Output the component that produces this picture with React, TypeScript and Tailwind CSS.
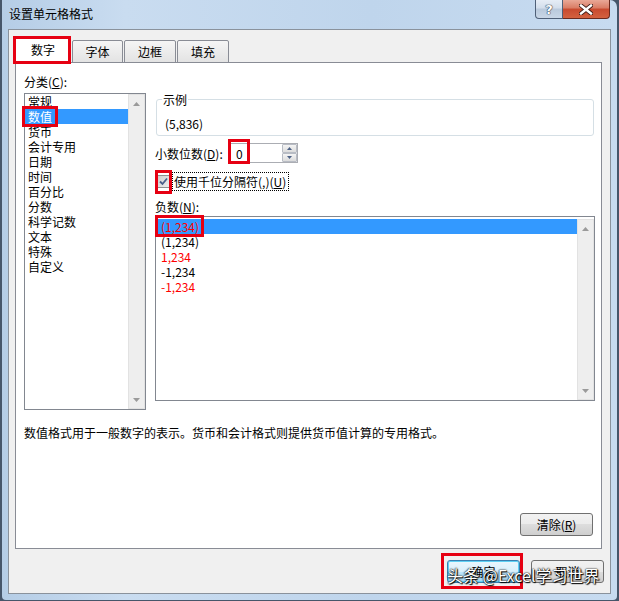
import React from "react";

const CATS = ["常规", "数值", "货币", "会计专用", "日期", "时间", "百分比", "分数", "科学记数", "文本", "特殊", "自定义"];

function Arrow({ down }: { down?: boolean }) {
  return (
    <svg width="7" height="4" viewBox="0 0 7 4">
      {down ? <path d="M0 0 L7 0 L3.5 4 Z" fill="#9a9a9a" /> : <path d="M0 4 L7 4 L3.5 0 Z" fill="#9a9a9a" />}
    </svg>
  );
}

function VScroll() {
  return (
    <div className="w-[17px] h-full flex flex-col justify-between bg-[#eeeeee] border border-[#e2e2e2]">
      <div className="h-[17px] flex items-center justify-center">
        <Arrow />
      </div>
      <div className="h-[17px] flex items-center justify-center">
        <Arrow down />
      </div>
    </div>
  );
}

function Btn({ children, def }: { children: React.ReactNode; def?: boolean }) {
  return (
    <div
      className={
        def
          ? "w-[73px] h-[23px] rounded-[3px] border border-[#3c7fb1] shadow-[inset_0_0_0_1px_#5fd0f4] bg-[linear-gradient(#eaf6fd,#d9f0fc_50%,#bee6fd_50%,#a7d9f5)] flex items-center justify-center leading-[15px]"
          : "w-[73px] h-[23px] rounded-[3px] border border-[#707070] bg-[linear-gradient(#f2f2f2,#ebebeb_50%,#dddddd_50%,#cfcfcf)] flex items-center justify-center leading-[15px]"
      }
    >
      {children}
    </div>
  );
}

export default function App() {
  return (
    <div className="relative w-[619px] h-[601px] bg-[#46566a] pl-[2px] overflow-hidden font-['Noto_Sans_CJK_SC',sans-serif] text-[12px] text-black">
      <div className="w-[615px] h-[600px] rounded-tr-[7px] rounded-b-[4px] bg-[linear-gradient(90deg,#b5cde6,#c9dcf0_20%,#bfd5ec_60%,#c7dbf0)] flex flex-col">
        {/* title bar */}
        <div className="h-[29px] flex items-start justify-between pl-[7px] pr-[7px]">
          <div className="mt-[6px] leading-[16px] text-[12px] text-black">设置单元格格式</div>
          <div className="flex">
            <div className="w-[28px] h-[19px] rounded-bl-[4px] border border-t-0 border-[#4f6078] bg-[linear-gradient(#e6edf6,#d3deeb_45%,#b9c9dc_50%,#c9d7e7)] flex items-center justify-center">
              <span className="font-['DejaVu_Sans',sans-serif] font-bold text-[13px] leading-[15px] text-white [text-shadow:0_0_1px_#2a3a50,0_0_1px_#2a3a50,0_0_1px_#2a3a50]">?</span>
            </div>
            <div className="w-[47px] h-[19px] rounded-br-[4px] border border-t-0 border-l-0 border-[#6b2a1e] bg-[linear-gradient(#e9a897,#d97c64_45%,#c84a2f_50%,#d3613f)] flex items-center justify-center">
              <svg width="14" height="11" viewBox="0 0 14 11">
                <path d="M2 1.5 L12 9.5 M12 1.5 L2 9.5" stroke="#3b1a14" strokeWidth="4.2" strokeLinecap="square" />
                <path d="M2 1.5 L12 9.5 M12 1.5 L2 9.5" stroke="#ffffff" strokeWidth="2.4" strokeLinecap="square" />
              </svg>
            </div>
          </div>
        </div>

        {/* client area */}
        <div className="ml-[6px] w-[603px] h-[565px] border border-[#8a929c] bg-[#f0f0f0] flex flex-col">
          {/* tabs */}
          <div className="ml-[6px] mt-[6px] h-[27px] flex items-end">
            <div className="relative z-10 w-[56px] h-[27px] border border-b-0 border-[#898c95] bg-white flex items-center justify-center pb-[1px] leading-[15px]">
              数字
            </div>
            <div className="ml-[1px] w-[51px] h-[23px] border border-[#898c95] rounded-t-[2px] bg-[linear-gradient(#f5f5f5,#e3e3e3)] flex items-center justify-center pb-[1px] leading-[15px]">
              字体
            </div>
            <div className="ml-[1px] w-[52px] h-[23px] border border-[#898c95] rounded-t-[2px] bg-[linear-gradient(#f5f5f5,#e3e3e3)] flex items-center justify-center pb-[1px] leading-[15px]">
              边框
            </div>
            <div className="ml-[1px] w-[52px] h-[23px] border border-[#898c95] rounded-t-[2px] bg-[linear-gradient(#f5f5f5,#e3e3e3)] flex items-center justify-center pb-[1px] leading-[15px]">
              填充
            </div>
          </div>

          {/* panel */}
          <div className="ml-[6px] -mt-[1px] w-[587px] h-[487px] border border-[#898c95] bg-white flex flex-col pl-[8px] pt-[11px] leading-[15px]">
            <div className="flex">
              {/* left column */}
              <div className="w-[122px] flex flex-col">
                <div className="h-[15px]">
                  分类(<span className="underline">C</span>):
                </div>
                <div className="mt-[4px] w-[122px] h-[317px] border border-[#828790] bg-white flex">
                  <div className="w-[103px] flex flex-col">
                    {CATS.map((c, i) => (
                      <div
                        key={c}
                        className={
                          i === 1
                            ? "h-[15px] pl-[3px] bg-[#3399ff] text-white"
                            : "h-[15px] pl-[3px]"
                        }
                      >
                        {c}
                      </div>
                    ))}
                  </div>
                  <VScroll />
                </div>
              </div>

              {/* right column */}
              <div className="ml-[9px] w-[440px] flex flex-col">
                <div className="relative mt-[25px] ml-[1px] w-[438px] h-[37px] border border-[#d5dfe5] rounded-[3px] pl-[8px] pt-[16px]">
                  <div className="absolute left-[5px] -top-[8px] px-[1px] bg-white text-[#000]">示例</div>
                  (5,836)
                </div>

                <div className="mt-[7px] h-[20px] flex items-center">
                  <div className="w-[75px]">
                    小数位数(<span className="underline">D</span>):
                  </div>
                  <div className="w-[68px] h-[20px] border border-[#abadb3] bg-white flex">
                    <div className="flex-1 pl-[5px] flex items-center">0</div>
                    <div className="w-[15px] flex flex-col">
                      <div className="h-[9px] border border-[#b8bcc4] rounded-[1px] bg-[linear-gradient(#f4f4f4,#dcdcdc)] flex items-center justify-center">
                        <svg width="5" height="3" viewBox="0 0 5 3"><path d="M0 3 L5 3 L2.5 0 Z" fill="#4d6185" /></svg>
                      </div>
                      <div className="h-[9px] border border-[#b8bcc4] rounded-[1px] bg-[linear-gradient(#f4f4f4,#dcdcdc)] flex items-center justify-center">
                        <svg width="5" height="3" viewBox="0 0 5 3"><path d="M0 0 L5 0 L2.5 3 Z" fill="#4d6185" /></svg>
                      </div>
                    </div>
                  </div>
                </div>

                <div className="mt-[9px] h-[19px] flex items-center">
                  <div className="ml-[2px] w-[13px] h-[13px] border border-[#8e8f8f] bg-[linear-gradient(135deg,#d0d0d0,#ececec)] flex items-center justify-center">
                    <svg width="9" height="9" viewBox="0 0 9 9">
                      <path d="M1 4.5 L3.5 7 L8 1.5" stroke="#4a5f8a" strokeWidth="1.8" fill="none" />
                    </svg>
                  </div>
                  <div className="ml-[2px] h-[19px] border border-dotted border-black pl-[1px] pr-[2px] flex items-center">
                    使用千位分隔符(,)(<span className="underline">U</span>)
                  </div>
                </div>

                <div className="mt-[8px] h-[15px]">
                  负数(<span className="underline">N</span>):
                </div>
                <div className="mt-[2px] w-[440px] h-[185px] border border-[#828790] bg-white flex pt-[2px]">
                  <div className="w-[421px] flex flex-col">
                    <div className="h-[15px] pl-[5px] bg-[#3399ff] text-[#ff0000]">(1,234)</div>
                    <div className="h-[15px] pl-[5px]">(1,234)</div>
                    <div className="h-[15px] pl-[5px] text-[#ff0000]">1,234</div>
                    <div className="h-[15px] pl-[5px]">-1,234</div>
                    <div className="h-[15px] pl-[5px] text-[#ff0000]">-1,234</div>
                  </div>
                  <VScroll />
                </div>
              </div>
            </div>

            <div className="mt-[15px] h-[15px]">数值格式用于一般数字的表示。货币和会计格式则提供货币值计算的专用格式。</div>

            <div className="mt-[73px] pr-[8px] flex justify-end">
              <Btn>
                清除(<span className="underline">R</span>)
              </Btn>
            </div>
          </div>

          {/* bottom buttons */}
          <div className="mt-[11px] pr-[6px] flex justify-end gap-[11px]">
            <Btn def>确定</Btn>
            <Btn>取消</Btn>
          </div>
        </div>
      </div>

      {/* red annotation boxes */}
      <div className="absolute z-20 left-[13px] top-[36px] w-[58px] h-[28px] border-[3px] border-[#e60012]" />
      <div className="absolute z-20 left-[22px] top-[106px] w-[36px] h-[21px] border-[3px] border-[#e60012]" />
      <div className="absolute z-20 left-[228px] top-[139px] w-[22px] h-[25px] border-[3px] border-[#e60012]" />
      <div className="absolute z-20 left-[155px] top-[170px] w-[17px] h-[24px] border-[3px] border-[#e60012]" />
      <div className="absolute z-20 left-[155px] top-[215px] w-[49px] h-[22px] border-[3px] border-[#e60012]" />
      <div className="absolute z-20 left-[441px] top-[553px] w-[82px] h-[36px] border-[3px] border-[#e60012]" />

      {/* watermark */}
      <div className="absolute z-30 left-[447px] top-[565px] text-[16px] leading-[20px] text-white [text-shadow:0_0_2px_#000,1px_1px_1px_#000,0_0_1px_#000]">
        头条 @Excel学习世界
      </div>
    </div>
  );
}
